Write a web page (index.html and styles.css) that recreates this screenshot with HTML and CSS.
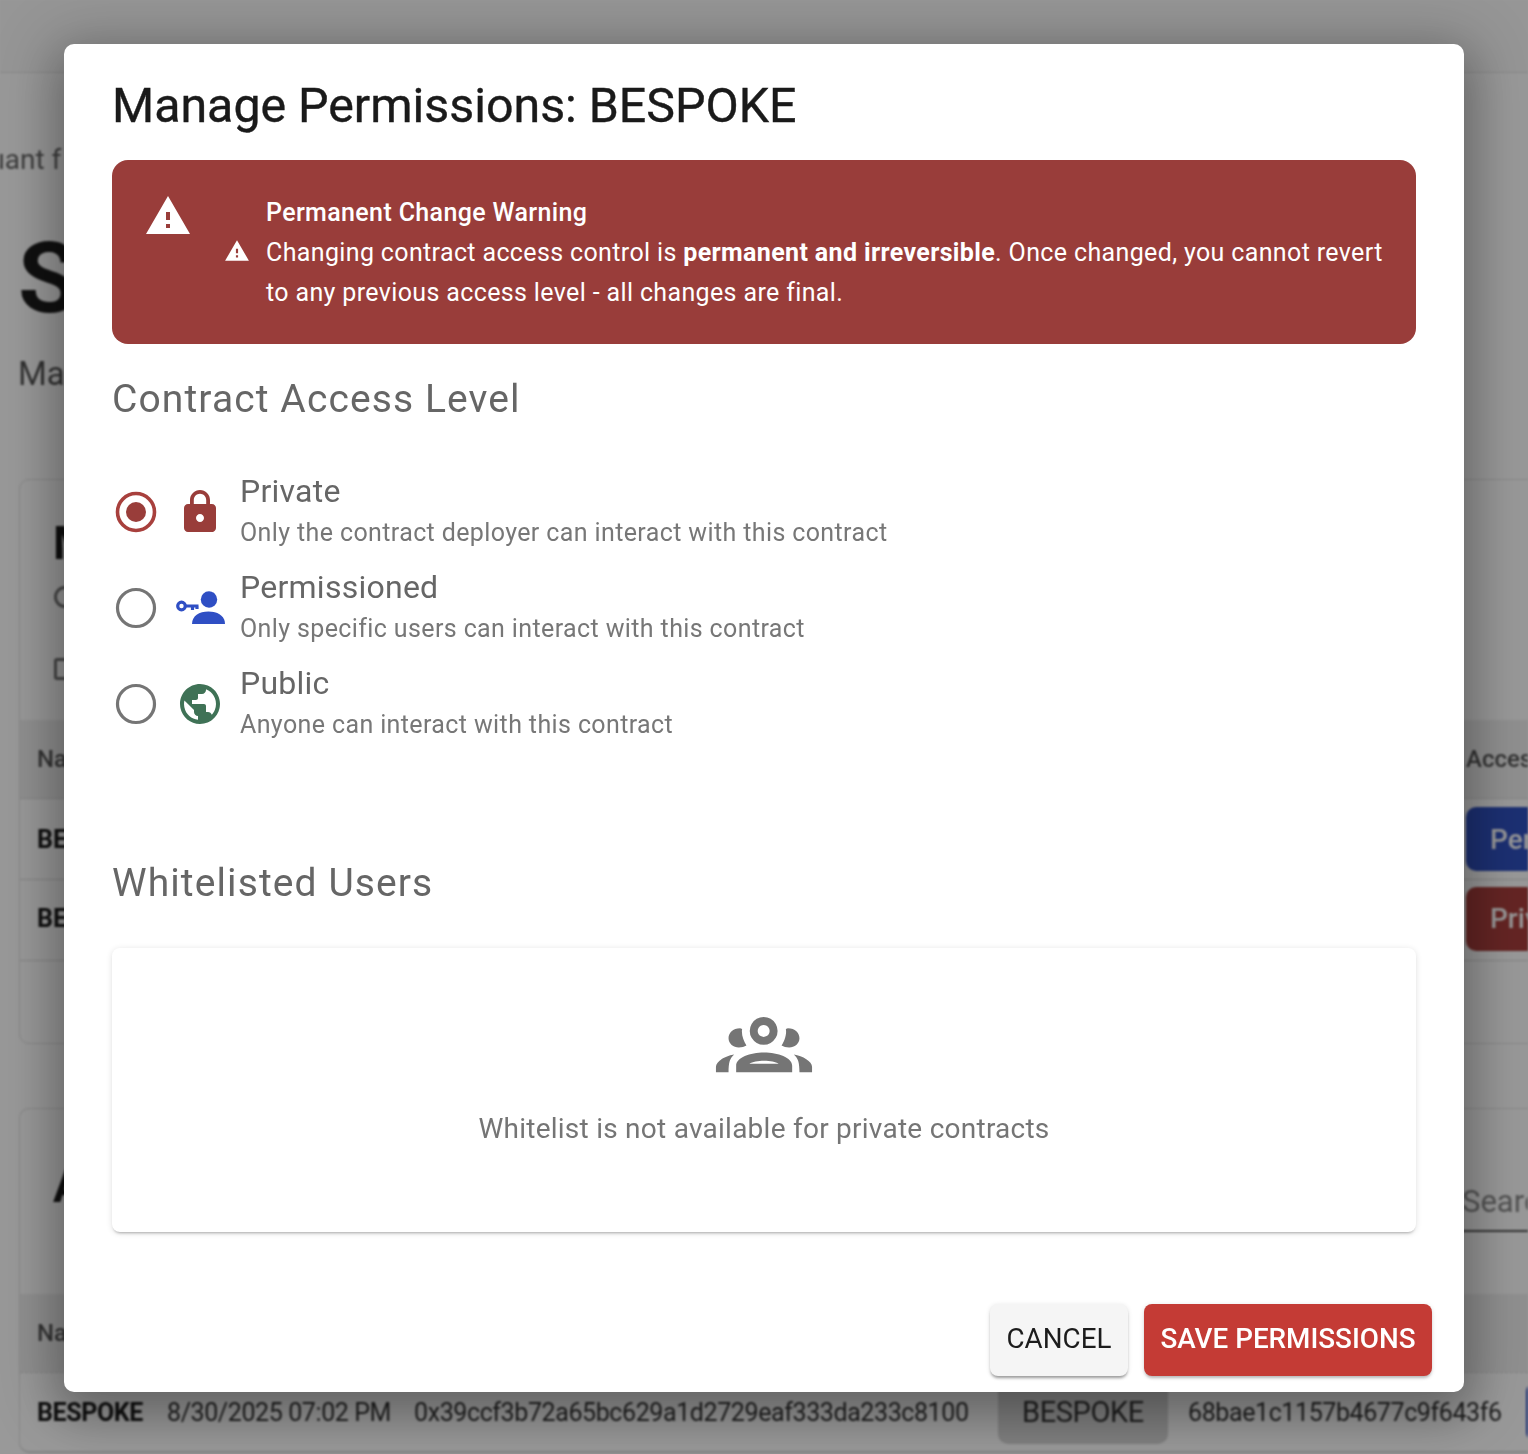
FILE: index.html
```html
<!DOCTYPE html>
<html lang="en">
<head>
<meta charset="utf-8">
<title>Manage Permissions</title>
<link rel="stylesheet" href="styles.css">
</head>
<body>
<div class="page">
  <header class="topbar"></header>
  <p class="crumb">Quant f</p>
  <h1 class="hero">S</h1>
  <p class="lede">Ma</p>

  <section class="panel panel-one">
    <h2 class="panel-title">M</h2>
    <div class="meta-icons"><span class="meta-circle"></span><span class="meta-square"></span></div>
    <div class="trow thead"><span>Name</span><span>Access</span></div>
    <div class="trow tbody"><b>BESPOKE</b><span class="chip chip-blue">Permissioned</span></div>
    <div class="trow tbody"><b>BESPOKE</b><span class="chip chip-red">Private</span></div>
  </section>

  <section class="panel panel-two">
    <div class="panel-head">
      <h2 class="panel-title">A</h2>
      <div class="search">Search</div>
    </div>
    <div class="thead thead-two"><span>Name</span></div>
    <div class="audit-row">
      <b>BESPOKE</b>
      <span>8/30/2025 07:02 PM</span>
      <span>0x39ccf3b72a65bc629a1d2729eaf333da233c8100</span>
      <span class="audit-chip">BESPOKE</span>
      <span class="audit-id">68bae1c1157b4677c9f643f6</span>
      <span class="audit-blue"></span>
    </div>
  </section>
</div>

<div class="overlay">
  <div class="modal" role="dialog">
    <h2 class="modal-title">Manage Permissions: BESPOKE</h2>

    <div class="alert">
      <svg class="alert-icon" viewBox="0 0 24 24"><path fill="#fff" d="M1 21h22L12 2 1 21zm12-3h-2v-2h2v2zm0-4h-2v-4h2v4z"/></svg>
      <svg class="alert-inline" viewBox="0 0 24 24"><path fill="#fff" d="M1 21h22L12 2 1 21zm12-3h-2v-2h2v2zm0-4h-2v-4h2v4z"/></svg>
      <div class="alert-text">
        <div class="alert-head">Permanent Change Warning</div>
        <div>Changing contract access control is <strong>permanent and irreversible</strong>. Once changed, you cannot revert to any previous access level - all changes are final.</div>
      </div>
    </div>

    <h3 class="section-title">Contract Access Level</h3>

    <div class="options">
      <div class="option">
        <svg class="radio" viewBox="0 0 44 44"><circle cx="22" cy="22" r="18.500" fill="none" stroke="#a8403d" stroke-width="3.600"/><circle cx="22" cy="22" r="10" fill="#993d3a"/></svg>
        <svg class="opt-icon" viewBox="0.500 0 24 24"><path fill="#993d3a" d="M18 8h-1V6c0-2.760-2.240-5-5-5S7 3.240 7 6v2H6c-1.100 0-2 .9-2 2v10c0 1.100.9 2 2 2h12c1.100 0 2-.9 2-2V10c0-1.100-.9-2-2-2zm-6 9c-1.100 0-2-.9-2-2s.9-2 2-2 2 .9 2 2-.9 2-2 2zm3.100-9H8.900V6c0-1.710 1.390-3.100 3.100-3.100 1.710 0 3.100 1.390 3.100 3.100v2z"/></svg>
        <div class="opt-text"><div class="opt-label">Private</div><div class="opt-sub">Only the contract deployer can interact with this contract</div></div>
      </div>
      <div class="option">
        <svg class="radio" viewBox="0 0 44 44"><circle cx="22" cy="22" r="18.500" fill="none" stroke="#757575" stroke-width="3.200"/></svg>
        <svg class="opt-icon" viewBox="0 0 50 36"><g fill="#2f4fc4"><circle cx="33" cy="9.500" r="8.200"/><path d="M16 34c0-8 7-12.500 16.500-12.500S49 26 49 34z"/></g><g fill="none" stroke="#2f4fc4"><circle cx="5.500" cy="16" r="3.800" stroke-width="3.200"/><path d="M9 16h13.500M16.500 16v4M21 16v3" stroke-width="3.200"/></g></svg>
        <div class="opt-text"><div class="opt-label">Permissioned</div><div class="opt-sub">Only specific users can interact with this contract</div></div>
      </div>
      <div class="option">
        <svg class="radio" viewBox="0 0 44 44"><circle cx="22" cy="22" r="18.500" fill="none" stroke="#757575" stroke-width="3.200"/></svg>
        <svg class="opt-icon" viewBox="0.500 0 24 24"><path fill="#3f7256" d="M12 2C6.480 2 2 6.480 2 12s4.480 10 10 10 10-4.480 10-10S17.520 2 12 2zm-1 17.930c-3.950-.49-7-3.850-7-7.930 0-.62.08-1.210.21-1.790L9 15v1c0 1.100.9 2 2 2v1.930zm6.900-2.540c-.26-.81-1-1.390-1.900-1.390h-1v-3c0-.55-.45-1-1-1H8v-2h2c.55 0 1-.45 1-1V7h2c1.100 0 2-.9 2-2v-.41c2.930 1.190 5 4.060 5 7.410 0 2.080-.8 3.970-2.100 5.390z"/></svg>
        <div class="opt-text"><div class="opt-label">Public</div><div class="opt-sub">Anyone can interact with this contract</div></div>
      </div>
    </div>

    <h3 class="section-title section-second">Whitelisted Users</h3>

    <div class="empty-card">
      <svg class="empty-icon" viewBox="165 75 294 172">
        <g fill="#757575">
          <path fill-rule="evenodd" d="M311 78a42 42 0 1 0 .01 0zM311 102a18 18 0 1 1-.01 0z"/>
          <path fill-rule="evenodd" d="M228 245V225C228 200 270 185 312 185C354 185 397 200 397 225V245zM268 219C285 207 340 207 356 219z"/>
          <path d="M240 112C218 112 205 126 205 142C205 158 220 170 236 170C245 170 253 168 259 164C250 150 243 130 246 114zM167 245V228C167 212 195 195 222 191C209 202 205 215 205 245z"/>
          <path d="M384 112C406 112 419 126 419 142C419 158 404 170 388 170C379 170 371 168 365 164C374 150 381 130 378 114zM457 245V228C457 212 429 195 402 191C415 202 419 215 419 245z"/>
        </g>
      </svg>
      <p class="empty-text">Whitelist is not available for private contracts</p>
    </div>

    <div class="actions">
      <button class="btn btn-cancel">CANCEL</button>
      <button class="btn btn-save">SAVE PERMISSIONS</button>
    </div>
  </div>
</div>
</body>
</html>
```

FILE: styles.css
```css
* { box-sizing: border-box; }
html, body { margin: 0; height: 1454px; overflow: hidden; background: #fff; }
body { font-family: Roboto, "Liberation Sans", sans-serif; position: relative; width: 1528px; }

/* Page behind the dialog */
.page { width: 1528px; height: 1454px; overflow: hidden; background: #fff; color: #1c1c1c; padding-left: 20px; filter: blur(0.9px); }
.topbar { height: 73px; margin-left: -20px; background: #fafafa; border-bottom: 1px solid #e4e4e4; }
.crumb { margin: 70px 0 0 -50px; height: 34px; font-size: 28px; line-height: 34px; color: #666; }
.hero { margin: 47px 0 0 -2px; height: 110px; font-size: 98px; line-height: 110px; font-weight: 700; }
.lede { margin: 20px 0 0 -2px; height: 40px; font-size: 33px; line-height: 40px; color: #555; }
.panel { width: 1600px; margin-left: -1px; border: 1px solid #e2e2e2; border-radius: 10px; background: #fff; position: relative; }
.panel-one { margin-top: 85px; height: 565px; }
.panel-two { margin-top: 64px; height: 345px; border-bottom: 2px solid #ddd; }
.panel-title { margin: 0; padding: 38px 0 0 33px; font-size: 46px; line-height: 50px; font-weight: 700; height: 88px; }
.meta-icons { display: flex; flex-direction: column; gap: 50px; padding: 18px 0 0 34px; height: 152px; }
.meta-circle { width: 22px; height: 22px; border: 3px solid #777; border-radius: 50%; }
.meta-square { width: 22px; height: 22px; border: 3px solid #777; border-radius: 3px; }
.trow { display: grid; grid-template-columns: 1446px 1fr; align-items: center; padding-left: 17px; border-bottom: 1px solid #ddd; }
.trow > :last-child { margin-left: -17px; }
.thead { height: 79px; background: #f1f1f1; font-size: 24px; font-weight: 500; color: #555; }
.tbody { height: 81px; font-size: 25px; }
.tbody:last-child { padding-bottom: 3px; }
.chip { display: flex; align-items: center; height: 64px; width: 220px; padding-left: 24px; border-radius: 10px; font-size: 28px; font-weight: 500; color: #fff; }
.chip-blue { background: #3050c0; }
.chip-red { background: #a83f3c; }
.panel-head { display: grid; grid-template-columns: 1442px 1fr; height: 185px; }
.panel-head .panel-title { padding-top: 52px; height: 120px; }
.search { margin-top: 74px; height: 49px; border-bottom: 2px solid #555; font-size: 31px; line-height: 38px; color: #8a8a8a; }
.thead-two { display: flex; align-items: center; padding-left: 17px; border-bottom: 1px dashed #ddd; }
.audit-row { display: grid; grid-template-columns: 130px 247px 584px 170px 358px 80px; align-items: center; padding-left: 17px; font-size: 25px; letter-spacing: -0.4px; height: 78px; color: #333; }
.audit-row b { color: #1c1c1c; font-weight: 700; }
.audit-chip { height: 71px; margin-top: -8px; padding-top: 8px; display: flex; align-items: center; justify-content: center; background: #d6d6d6; border-radius: 0 0 10px 10px; font-size: 29px; }
.audit-id { padding-left: 20px; white-space: nowrap; }
.audit-blue { height: 60px; background: #3050c0; border-radius: 10px 0 0 10px; }

/* Dialog */
.overlay { position: absolute; inset: 0; background: rgba(0, 0, 0, 0.4); padding: 44px 64px 62px; }
.modal { height: 1348px; background: #fff; border-radius: 10px; padding: 0 48px; display: flex; flex-direction: column; color: #1c1c1c; box-shadow: 0 18px 46px 4px rgba(0,0,0,.22), 0 8px 60px 16px rgba(0,0,0,.18); filter: blur(0.35px); }
.modal-title { margin: 0; height: 116px; padding-top: 31px; font-size: 48.300px; line-height: 62px; font-weight: 400; color: #1a1a1a; -webkit-text-stroke: 0.4px #1a1a1a; }
.alert { position: relative; height: 184px; background: #993d3a; border-radius: 16px; padding: 33px 30px 0 154px; color: #fff; font-size: 25px; line-height: 40px; letter-spacing: .36px; }
.alert-icon { position: absolute; left: 32px; top: 32px; width: 48px; height: 48px; }
.alert-inline { position: absolute; left: 112px; top: 78px; width: 26px; height: 26px; }
.alert-head { font-weight: 500; }
.section-title { margin: 31px 0 0; height: 48px; font-size: 39px; line-height: 48px; font-weight: 400; letter-spacing: 1.1px; color: #666; }
.section-second { margin-top: 107px; }
.options { display: flex; flex-direction: column; padding-top: 41px; }
.option { display: flex; align-items: center; height: 96px; }
.radio { width: 44px; height: 44px; margin-left: 2px; flex: none; }
.opt-icon { width: 50px; height: 48px; margin-left: 18px; flex: none; }
.opt-text { margin-left: 14px; }
.opt-label { font-size: 32px; line-height: 40px; color: #666; letter-spacing: .25px; }
.opt-sub { font-size: 25px; line-height: 43px; color: #777; letter-spacing: .38px; }
.empty-card { margin-top: 41px; height: 284px; border-radius: 8px; display: flex; flex-direction: column; align-items: center; padding-top: 68px; box-shadow: 0 3px 3px -2px rgba(0,0,0,.28), 0 1px 6px 0 rgba(0,0,0,.12); }
.empty-icon { width: 98px; height: 57px; }
.empty-text { margin: 36px 0 0; font-size: 28px; line-height: 40px; color: #757575; letter-spacing: .25px; }
.actions { display: flex; justify-content: flex-end; gap: 16px; margin: 72px -16px 0 0; }
.btn { height: 72px; border: 0; border-radius: 8px; font-family: inherit; font-size: 27.800px; font-weight: 500; padding: 0 0 4px; }
.btn-cancel { width: 138px; background: #f5f5f5; color: #1c1c1c; box-shadow: 0 3px 3px -1px rgba(0,0,0,.35), 0 1px 5px rgba(0,0,0,.12); font-weight: 400; }
.btn-save { width: 288px; background: #c43b35; color: #fff; box-shadow: 0 3px 3px -1px rgba(0,0,0,.22), 0 1px 5px rgba(0,0,0,.12); }
```
